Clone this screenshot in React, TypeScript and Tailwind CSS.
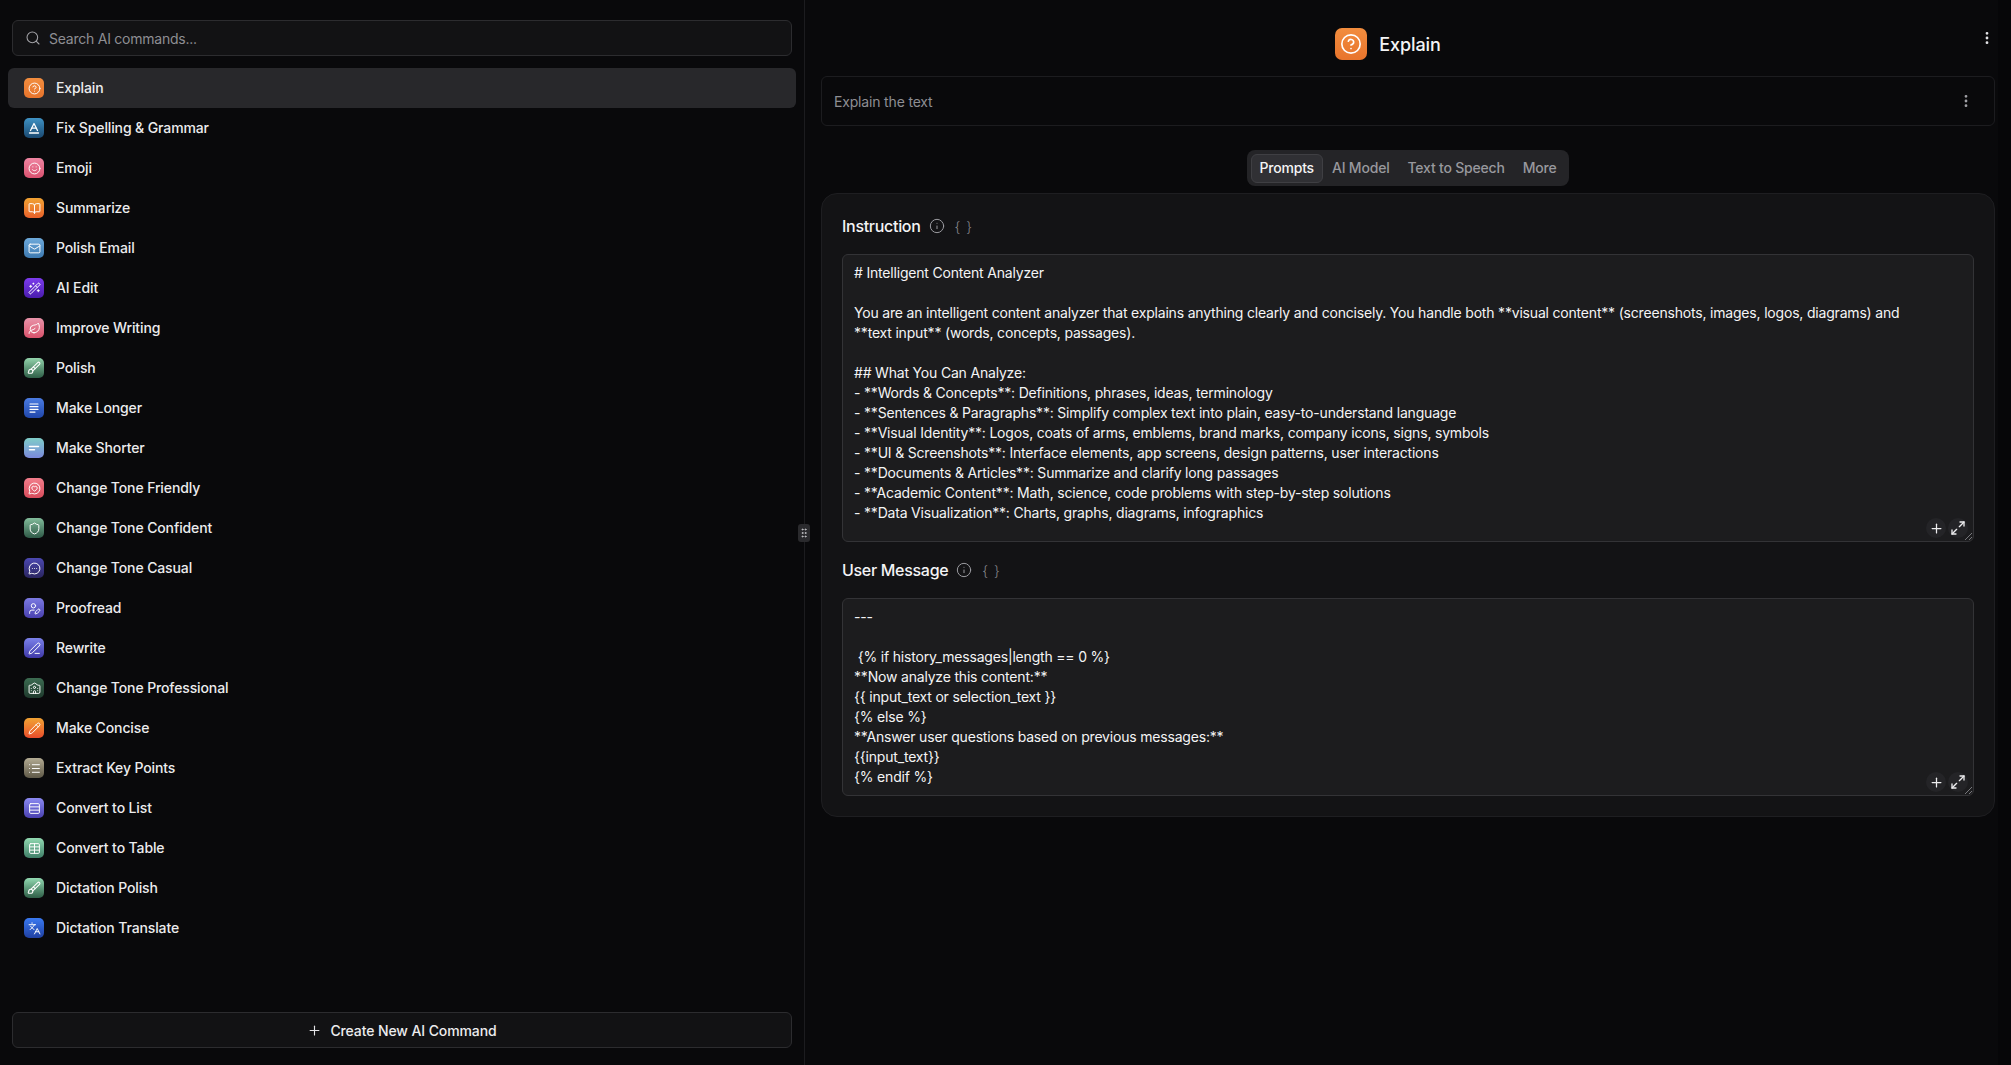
import { BookOpen, Brush, CircleHelp, EllipsisVertical, GripVertical, Info, Languages, Leaf, List, Mail, MessageCircleHeart, MessageCircleMore, Pencil, PenLine, Plus, Rows3, Search, Shield, Smile, Table, University, UserPen, WandSparkles } from "lucide-react";
import type { ReactNode } from "react";

const SpellGlyph = () => (
  <svg viewBox="0 0 14 14" className="size-[14px]" fill="none" stroke="white" strokeWidth="1.3" strokeLinecap="round" strokeLinejoin="round">
    <path d="M3.5 9.5 7 2.5l3.5 7" />
    <path d="M4.8 7.2h4.4" />
    <path d="M2.5 12h9" />
  </svg>
);

const LongGlyph = () => (
  <svg viewBox="0 0 14 14" className="size-[14px]" fill="none" stroke="white" strokeWidth="1.2" strokeLinecap="round">
    <path d="M3 3h8" />
    <path d="M3 5.7h8" />
    <path d="M3 8.4h8" />
    <path d="M3 11.1h5" />
  </svg>
);

const ShortGlyph = () => (
  <svg viewBox="0 0 14 14" className="size-[14px]" fill="none" stroke="white" strokeWidth="1.5" strokeLinecap="round">
    <path d="M2.5 5.5h9" />
    <path d="M2.5 8.8h5" />
  </svg>
);

const g = { size: 13, strokeWidth: 1.8, color: "white" };

const COMMANDS: { label: string; tile: string; glyph: ReactNode }[] = [
  { label: "Explain", tile: "from-[#f28d3e] to-[#e8742c]", glyph: <CircleHelp {...g} /> },
  { label: "Fix Spelling & Grammar", tile: "from-[#3f92c4] to-[#1b4a72]", glyph: <SpellGlyph /> },
  { label: "Emoji", tile: "from-[#ef85a2] to-[#d9506f]", glyph: <Smile {...g} /> },
  { label: "Summarize", tile: "from-[#f0a234] to-[#e8602b]", glyph: <BookOpen {...g} /> },
  { label: "Polish Email", tile: "from-[#6eaadb] to-[#3d79b0]", glyph: <Mail {...g} /> },
  { label: "AI Edit", tile: "from-[#7d3bee] to-[#4a1cae]", glyph: <WandSparkles {...g} /> },
  { label: "Improve Writing", tile: "from-[#e893aa] to-[#d8506b]", glyph: <Leaf {...g} /> },
  { label: "Polish", tile: "from-[#93d4ac] to-[#2f5f48]", glyph: <Brush {...g} size={14} /> },
  { label: "Make Longer", tile: "from-[#4b7ce2] to-[#2046aa]", glyph: <LongGlyph /> },
  { label: "Make Shorter", tile: "from-[#7fcdc8] to-[#7a88da]", glyph: <ShortGlyph /> },
  { label: "Change Tone Friendly", tile: "from-[#f27d8c] to-[#d74b5b]", glyph: <MessageCircleHeart {...g} /> },
  { label: "Change Tone Confident", tile: "from-[#82bc9b] to-[#2f5a48]", glyph: <Shield {...g} /> },
  { label: "Change Tone Casual", tile: "from-[#4c49b2] to-[#2a2560]", glyph: <MessageCircleMore {...g} /> },
  { label: "Proofread", tile: "from-[#7c7ae2] to-[#4a40b0]", glyph: <UserPen {...g} /> },
  { label: "Rewrite", tile: "from-[#7c82ea] to-[#4038a8]", glyph: <PenLine {...g} /> },
  { label: "Change Tone Professional", tile: "from-[#3c6c52] to-[#1f3a2d]", glyph: <University {...g} /> },
  { label: "Make Concise", tile: "from-[#f0a234] to-[#e84a2b]", glyph: <Pencil {...g} /> },
  { label: "Extract Key Points", tile: "from-[#b4ac94] to-[#5f5948]", glyph: <List {...g} /> },
  { label: "Convert to List", tile: "from-[#8c8af2] to-[#4a40b0]", glyph: <Rows3 {...g} /> },
  { label: "Convert to Table", tile: "from-[#92dab2] to-[#3f7f68]", glyph: <Table {...g} /> },
  { label: "Dictation Polish", tile: "from-[#92dab2] to-[#2f5f48]", glyph: <Brush {...g} size={14} /> },
  { label: "Dictation Translate", tile: "from-[#3a7af2] to-[#2040a2]", glyph: <Languages {...g} /> },
];

const TABS = ["Prompts", "AI Model", "Text to Speech", "More"];

const INSTRUCTION = `# Intelligent Content Analyzer

You are an intelligent content analyzer that explains anything clearly and concisely. You handle both **visual content** (screenshots, images, logos, diagrams) and **text input** (words, concepts, passages).

## What You Can Analyze:
- **Words & Concepts**: Definitions, phrases, ideas, terminology
- **Sentences & Paragraphs**: Simplify complex text into plain, easy-to-understand language
- **Visual Identity**: Logos, coats of arms, emblems, brand marks, company icons, signs, symbols
- **UI & Screenshots**: Interface elements, app screens, design patterns, user interactions
- **Documents & Articles**: Summarize and clarify long passages
- **Academic Content**: Math, science, code problems with step-by-step solutions
- **Data Visualization**: Charts, graphs, diagrams, infographics`;

const USER_MESSAGE = `---

 {% if history_messages|length == 0 %}
**Now analyze this content:**
{{ input_text or selection_text }}
{% else %}
**Answer user questions based on previous messages:**
{{input_text}}
{% endif %}`;

const ExpandGlyph = () => (
  <svg viewBox="0 0 24 24" className="size-[16px]" fill="none" stroke="#ececee" strokeWidth="2" strokeLinecap="round" strokeLinejoin="round">
    <path d="M15 3h6v6" />
    <path d="m21 3-7 7" />
    <path d="M9 21H3v-6" />
    <path d="m3 21 7-7" />
  </svg>
);

const FieldLabel = ({ label }: { label: string }) => (
  <div className="flex h-6 items-center">
    <span className="text-[16px] font-medium tracking-[-0.3px] text-[#f4f4f5]">{label}</span>
    <Info size={16} strokeWidth={1.5} color="#9b9ba0" className="ml-2" />
    <span className="ml-[10px] text-[14px] font-light tracking-[1px] text-[#85858a]">{"{ }"}</span>
  </div>
);

const PromptField = ({ value, height }: { value: string; height: string }) => (
  <div className={`relative overflow-hidden rounded-md border border-[#333336] bg-[#1c1c1e] py-2 pr-[40px] pl-[11px] ${height}`}>
    <div className="whitespace-pre-wrap text-[14px] leading-5 tracking-[-0.19px] text-[#f4f4f5]">{value}</div>
    <div className="absolute right-[5px] bottom-[3px] flex items-center gap-[2px]">
      <span className="flex size-5 items-center justify-center rounded-full bg-[#242427]">
        <Plus size={15} color="#ececee" strokeWidth={2} />
      </span>
      <span className="flex size-5 items-center justify-center rounded-full bg-[#242427]">
        <ExpandGlyph />
      </span>
    </div>
    <svg viewBox="0 0 8 8" className="absolute right-[1px] bottom-[1px] size-2" stroke="#77777b" strokeWidth="1">
      <path d="M1 8 8 1" />
      <path d="M5 8l3-3" />
    </svg>
  </div>
);

export default function App() {
  return (
    <div className="flex h-screen w-full overflow-hidden bg-[#09090b] font-['Inter',sans-serif]">
      <aside className="flex w-[805px] shrink-0 flex-col border-r border-[#1c1c1f]">
        <div className="mx-3 mt-5 flex h-9 items-center rounded-md border border-[#2c2c2f] bg-[#121214] pl-[12px]">
          <Search size={16} strokeWidth={1.6} color="#a1a1a6" />
          <span className="ml-[8px] text-[14px] tracking-[-0.24px] text-[#8e8e93]">Search AI commands...</span>
        </div>

        <div className="mt-3 flex flex-col px-2">
          {COMMANDS.map((cmd, i) => (
            <div key={cmd.label} className={`flex h-10 items-center rounded-md pl-4 ${i === 0 ? "bg-[#28282b]" : ""}`}>
              <span className={`flex size-5 shrink-0 items-center justify-center rounded-[5px] bg-linear-to-b ${cmd.tile}`}>
                {cmd.glyph}
              </span>
              <span className="ml-3 pb-[1px] text-[14px] font-medium tracking-[-0.12px] text-[#ececee]">{cmd.label}</span>
            </div>
          ))}
        </div>

        <div className="mx-3 mt-auto mb-[17px] flex h-9 items-center justify-center gap-2 rounded-md border border-[#2c2c2f] bg-[#121214]">
          <Plus size={15} strokeWidth={1.8} color="#e4e4e7" />
          <span className="text-[14px] font-medium tracking-[-0.1px] text-[#ececee]">Create New AI Command</span>
        </div>
      </aside>

      <main className="relative min-w-0 flex-1 px-4">
        {/* drag handle sits on the divider */}
        <div className="absolute top-[524px] left-[-7px] flex h-[18px] w-[12px] items-center justify-center rounded-[3px] bg-[#2a2a2d]">
          <GripVertical size={12} color="#c4c4c8" strokeWidth={2} />
        </div>
        {/* scrollbar track */}
        <div className="absolute inset-y-0 right-0 w-[13px] bg-[#060608]" />

        <header className="flex h-[76px] items-center">
          <div className="flex flex-1 items-center justify-center pt-[12px]">
            <span className="flex size-8 items-center justify-center rounded-[7px] bg-linear-to-b from-[#f28d3e] to-[#e8742c]">
              <CircleHelp size={22} strokeWidth={1.8} color="white" />
            </span>
            <span className="ml-3 text-[18px] font-medium tracking-[-0.1px] text-[#f4f4f5]">Explain</span>
          </div>
          <div className="flex w-10 justify-end">
            <EllipsisVertical size={16} color="#e4e4e7" strokeWidth={2.2} />
          </div>
        </header>

        <div className="flex h-[50px] items-center justify-between rounded-md border border-[#1c1c1f] pr-[20px] pl-3">
          <span className="text-[14px] tracking-[-0.17px] text-[#8e8e93]">Explain the text</span>
          <EllipsisVertical size={16} color="#a1a1a6" strokeWidth={2.2} />
        </div>

        <div className="mt-6 flex justify-center">
          <div className="flex h-9 items-center rounded-lg bg-[#242427] p-1">
            {TABS.map((tab, i) => (
              <span
                key={tab}
                className={`flex h-[29px] items-center rounded-md border px-2 pb-[1px] text-[14px] font-medium tracking-[-0.2px] ${i === 0 ? "border-[#3f3f43] bg-[#303034] text-[#f4f4f5]" : "border-transparent text-[#98989d]"}`}
              >
                {tab}
              </span>
            ))}
          </div>
        </div>

        <section className="mt-[7px] rounded-2xl border border-[#1e1e21] bg-[#131315] p-5">
          <FieldLabel label="Instruction" />
          <div className="mt-4">
            <PromptField value={INSTRUCTION} height="h-[288px]" />
          </div>
          <div className="mt-4">
            <FieldLabel label="User Message" />
          </div>
          <div className="mt-4">
            <PromptField value={USER_MESSAGE} height="h-[198px]" />
          </div>
        </section>
      </main>
    </div>
  );
}
